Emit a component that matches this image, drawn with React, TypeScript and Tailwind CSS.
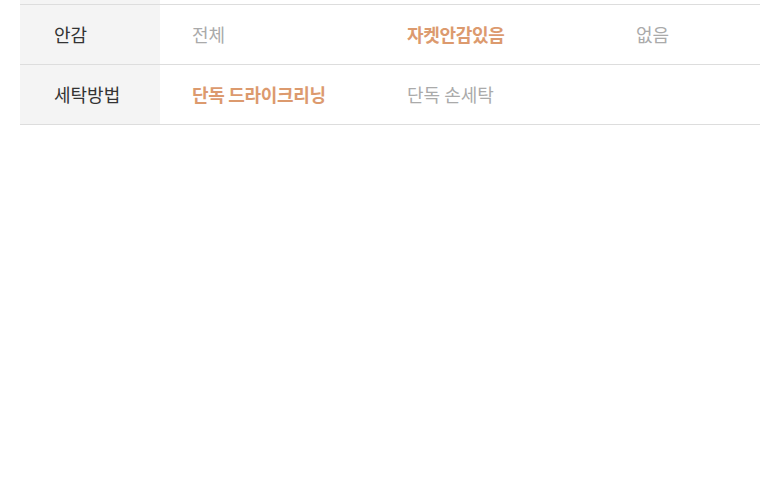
import React from "react";

const font = { fontFamily: '"Noto Sans CJK KR", "Noto Sans", sans-serif' };

export default function App() {
  return (
    <div className="w-[780px] h-[480px] bg-white" style={font}>
      <div className="pl-5 pr-5">
        <div className="grid grid-cols-[140px_215px_229px_1fr]">
          <div className="h-[5px] bg-[#f4f4f4] border-b border-[#dddddd]" />
          <div className="h-[5px] border-b border-[#dddddd]" />
          <div className="h-[5px] border-b border-[#dddddd]" />
          <div className="h-[5px] border-b border-[#dddddd]" />

          <div className="h-[60px] bg-[#f4f4f4] border-b border-[#dddddd] flex items-center pl-[34px] text-[18px] text-[#333333]">안감</div>
          <div className="h-[60px] border-b border-[#dddddd] flex items-center pl-8 text-[18px] text-[#aaaaaa]">전체</div>
          <div className="h-[60px] border-b border-[#dddddd] flex items-center pl-8 text-[18px] font-bold text-[#dc9a6e] tracking-[-0.3px]">자켓안감있음</div>
          <div className="h-[60px] border-b border-[#dddddd] flex items-center pl-8 text-[18px] text-[#aaaaaa]">없음</div>

          <div className="h-[60px] bg-[#f4f4f4] border-b border-[#dddddd] flex items-center pl-[34px] text-[18px] text-[#333333]">세탁방법</div>
          <div className="h-[60px] border-b border-[#dddddd] flex items-center pl-8 text-[18px] font-bold text-[#dc9a6e] tracking-[-0.3px]">단독 드라이크리닝</div>
          <div className="h-[60px] border-b border-[#dddddd] flex items-center pl-8 text-[18px] text-[#aaaaaa]">단독 손세탁</div>
          <div className="h-[60px] border-b border-[#dddddd]" />
        </div>
      </div>
    </div>
  );
}
